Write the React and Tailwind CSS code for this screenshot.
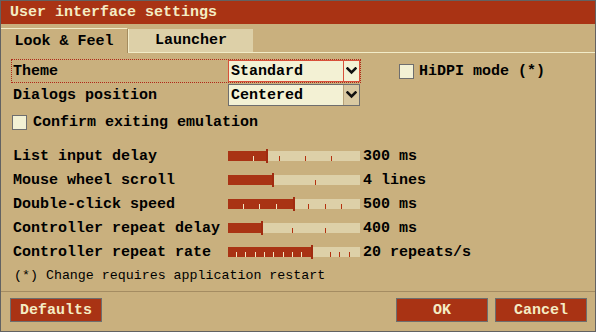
import React from 'react';

const mono = { fontFamily: '"Liberation Mono", "DejaVu Sans Mono", monospace' };

const sliders = [
    { label: 'List input delay', value: '300 ms', knob: 38, ticks: [25, 51, 77, 103] },
    { label: 'Mouse wheel scroll', value: '4 lines', knob: 44, ticks: [87] },
    { label: 'Double-click speed', value: '500 ms', knob: 65, ticks: [15, 31, 48, 80, 97, 113] },
    { label: 'Controller repeat delay', value: '400 ms', knob: 33, ticks: [64, 97] },
    { label: 'Controller repeat rate', value: '20 repeats/s', knob: 83, ticks: [8, 17, 27, 36, 45, 55, 64, 73, 102, 111, 121] },
];

const Chevron = () => (
    <svg width="11" height="8" viewBox="0 0 11 8">
        <polyline points="1.5,1.5 5.5,5.5 9.5,1.5" fill="none" stroke="#111" strokeWidth="2.6" strokeLinecap="square" />
    </svg>
);

const Select = ({ value, focused }) => (
    <div className={`w-[132px] h-[22px] flex bg-[#f3f1d4] border ${focused ? 'border-[#d8503a]' : 'border-[#6e6e6e]'}`}>
        <div className="flex-1 flex items-center pl-[2px] text-[15px] font-bold text-black leading-none">{value}</div>
        <div className={`w-[16px] flex items-center justify-center border-l ${focused ? 'border-[#d8503a] bg-[#f3f1d4]' : 'border-[#b8a278] bg-[#d9c9a2]'}`}>
            <Chevron />
        </div>
    </div>
);

const Checkbox = () => (
    <div className="w-[15px] h-[15px] border border-[#6e6e6e] bg-[#f3f1d4]" />
);

const Slider = ({ knob, ticks }) => (
    <svg width="132" height="14" viewBox="0 0 132 14">
        <rect x="0" y="2" width="132" height="10" fill="#ddd0a8" />
        <rect x="0" y="2" width={knob} height="10" fill="#a93314" />
        {ticks.map(t => (
            <rect key={t} x={t} y="7" width="1" height="5" fill={t < knob ? '#f2e8c4' : '#b4300f'} />
        ))}
        <rect x={knob} y="0" width="2" height="14" fill="#a12b10" />
    </svg>
);

const Button = ({ children }) => (
    <button className="w-[92px] h-[24px] bg-[#a93314] border border-[#6e6e6e] text-[#f4ecc4] text-[15px] font-bold leading-none flex items-center justify-center">
        {children}
    </button>
);

export default function App() {
    return (
        <div style={mono} className="w-[596px] h-[332px] bg-[#c9b07e] border border-[#626262] flex flex-col text-black overflow-hidden">
            {/* title bar */}
            <div className="h-[23px] bg-[#a93314] flex items-center pl-[9px] text-[15px] font-bold text-[#f4ecc4] leading-none">
                User interface settings
            </div>

            {/* tabs */}
            <div className="h-[29px] flex items-end">
                <div className="w-[127px] h-[25px] border-t border-r border-t-[#f2ecc8] border-r-[#a48c5e] flex items-center justify-center text-[15px] font-bold leading-none">
                    Look &amp; Feel
                </div>
                <div className="w-[125px] h-[24px] bg-[#ddd0a8] border-b border-l border-[#f2ecc8] flex items-center justify-center text-[15px] font-bold leading-none">
                    Launcher
                </div>
                <div className="flex-1 border-b border-[#f2ecc8]" />
            </div>

            {/* content */}
            <div className="px-[10px] text-[15px] font-bold leading-none">
                <div className="mt-[6px] flex items-center">
                    <div className="w-[350px] h-[24px] border border-dotted border-[#b02818] flex items-center">
                        <div className="w-[216px] pl-px">Theme</div>
                        <Select value="Standard" focused />
                    </div>
                    <div className="ml-[38px] flex items-center gap-[5px]">
                        <Checkbox />
                        <span>HiDPI mode (*)</span>
                    </div>
                </div>

                <div className="h-[24px] flex items-center pl-[2px]">
                    <div className="w-[215px]">Dialogs position</div>
                    <Select value="Centered" />
                </div>

                <div className="mt-[8px] h-[15px] flex items-center pl-px gap-[6px]">
                    <Checkbox />
                    <span>Confirm exiting emulation</span>
                </div>

                <div className="mt-[14px] flex flex-col">
                    {sliders.map(s => (
                        <div key={s.label} className="h-[24px] flex items-center pl-[2px]">
                            <div className="w-[215px]">{s.label}</div>
                            <Slider knob={s.knob} ticks={s.ticks} />
                            <span className="ml-[3px]">{s.value}</span>
                        </div>
                    ))}
                </div>

                <div className="mt-[4px] h-[16px] flex items-center pl-[3px] text-[13.3px] font-normal">
                    (*) Change requires application restart
                </div>
            </div>

            {/* footer */}
            <div className="mt-auto border-t border-[#a48c62] pt-[6px] pb-[9px] pl-[9px] pr-[8px] flex items-center">
                <Button>Defaults</Button>
                <div className="flex-1" />
                <div className="flex gap-[7px]">
                    <Button>OK</Button>
                    <Button>Cancel</Button>
                </div>
            </div>
        </div>
    );
}
